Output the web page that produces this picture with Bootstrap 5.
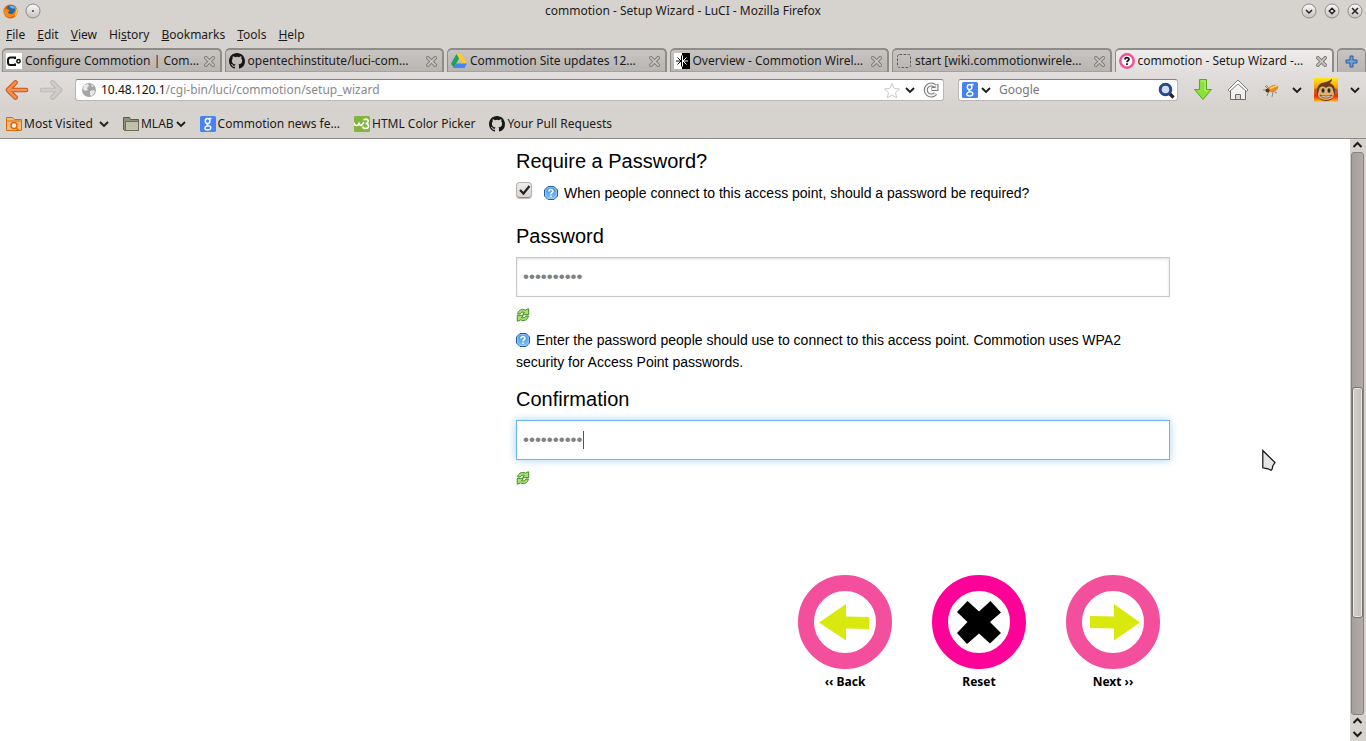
<!DOCTYPE html>
<html lang="en">
<head>
<meta charset="utf-8">
<meta name="viewport" content="width=device-width, initial-scale=1">
<title>commotion - Setup Wizard - LuCI</title>
<link href="https://cdn.jsdelivr.net/npm/bootstrap@5.3.0/dist/css/bootstrap.min.css" rel="stylesheet">
<style>
  :root { --chrome: #d6d2ce; --edge: #8f8b88; }
  body { font-family: "Noto Sans", "Open Sans", sans-serif; font-size: 12px; line-height: 16px; color: #1c1b1a; background: var(--chrome); }
  svg { display: block; flex: none; }
  button { font: inherit; color: inherit; background: none; border: 0; padding: 0; }

  .title-bar { height: 22px; padding: 0 3px; }
  .title-bar h1 { font-size: 12px; line-height: 16px; font-weight: 400; }
  .side-slot { width: 80px; gap: 7px; }
  .menu-bar { height: 26px; padding: 0 6px; gap: 12px; }

  .tab-strip { height: 24px; gap: 3px; padding-left: 2px; }
  .browser-tab { flex: 1 1 0; min-width: 0; border: 2px solid var(--edge); border-width: 2px 2px 0 1px; border-radius: 5px 5px 0 0; background: linear-gradient(#c8c4c2, #b8b4b2); padding: 0 5px 0 3px; gap: 3px; box-shadow: inset 0 -1px #a5a19f; }
  .browser-tab.current { background: linear-gradient(#efedeb, #e2dedd); box-shadow: none; }
  .tab-label { flex: 1 1 0; min-width: 0; overflow: hidden; white-space: nowrap; text-align: left; }
  .new-tab { width: 29px; border: 2px solid var(--edge); border-width: 2px 1px 0 1px; border-radius: 5px 5px 0 0; background: linear-gradient(#c8c4c2, #b8b4b2); }

  .nav-bar { height: 36px; padding: 0 6px 0 5px; background: linear-gradient(#e2dedd, var(--chrome)); }
  .field-box { height: 22px; background: #fff; border: 1px solid #bab6b3; border-top: 1px solid #85817e; border-radius: 3px; }
  .field-box input { border: 0; outline: 0; background: transparent; min-width: 0; padding: 0; }
  .address { flex: 1 1 0; margin-left: 12px; padding: 0 4px 0 5px; }
  .address-text { flex: 1 1 0; color: #8b8988; white-space: nowrap; overflow: hidden; }
  .address-text b { font-weight: 400; color: #111; }
  .search { width: 220px; margin-left: 14px; padding: 0 2px 0 3px; }
  .search input { flex: 1 1 0; color: #1c1b1a; }
  .search input::placeholder { color: #777; opacity: 1; }
  .engine { gap: 3px; }
  .tool-icons { margin-left: 14px; gap: 12px; }

  .bookmark-bar { height: 31px; padding: 1px 6px 0; gap: 14px; border-bottom: 1px solid var(--edge); }
  .bookmark-bar a { color: inherit; text-decoration: none; gap: 2px; white-space: nowrap; }

  .viewport { background: #fff; min-height: 0; }
  .page-wrap { max-width: 990px; padding-top: 10px; font-family: "Liberation Sans", Arial, sans-serif; font-size: 14px; line-height: 22px; color: #000; }
  .sidebar { width: 336px; flex: none; }
  .page-wrap h2 { font-size: 20px; line-height: 24px; font-weight: 400; margin: 14px 0 9px; }
  .page-wrap h2:first-child { margin-top: 0; }
  .tick-row { margin-bottom: 20px; }
  .tick { appearance: none; width: 16px; height: 16px; margin: 0; border-radius: 4px; border: 1px solid #b5b2af; border-bottom-color: #8e8b88; background: linear-gradient(#efedeb, #d8d5d2); box-shadow: 0 1px 1px #bbb; }
  .tick-mark { left: 3px; top: 2px; pointer-events: none; }
  .pass { display: block; width: 100%; height: 40px; border: 1px solid #c8c8c8; border-radius: 0; padding: 0 6px; font-family: "Liberation Sans", Arial, sans-serif; font-size: 17px; color: #808080; outline: 0; box-shadow: inset 0 1px 3px #ddd; caret-color: transparent; }
  .pass.active { border-color: #6db3ee; box-shadow: 0 0 8px #a3d1f5; }
  .caret { position: absolute; left: 67px; top: 11px; width: 1px; height: 18px; background: #555; }
  .help-icon { display: inline-block; vertical-align: -2px; margin-right: 6px; }
  .refresh { display: block; margin: 11px 0 7px; }
  .wizard-nav { gap: 40px; padding-right: 10px; margin-top: 90px; }
  .wizard-nav button { width: 94px; font-family: "Noto Sans", "Open Sans", sans-serif; font-size: 12px; line-height: 16px; font-weight: 700; }
  .wizard-nav svg { margin-bottom: 5px; }

  .scroll-bar { width: 16px; background: var(--chrome); padding: 0 2px 0 1px; }
  .trough { flex: 1 1 0; background: linear-gradient(90deg, #a4a09c, #b4aaa8); border: 1px solid #85817e; border-radius: 3px; }
  .before-thumb { flex: 236 1 0; }
  .after-thumb { flex: 97 1 0; }
  .thumb { flex: 230 1 0; border: 1px solid #77736f; border-radius: 3px; background: linear-gradient(90deg, #d2cecb, #c4c0bd); box-shadow: inset 0 0 0 1px #e9e6e4; }
  .pointer { position: absolute; left: 92.4%; top: 449px; }
</style>
</head>
<body class="d-flex flex-column vh-100 overflow-hidden">

<svg width="0" height="0" class="position-absolute" aria-hidden="true">
  <defs>
    <linearGradient id="knob" x2="0" y2="1"><stop stop-color="#fafafa"/><stop offset="1" stop-color="#c5c2bf"/></linearGradient>
    <linearGradient id="blue" x2="0" y2="1"><stop stop-color="#3f8fdc"/><stop offset="1" stop-color="#7fc4f5"/></linearGradient>
    <symbol id="i-close" viewBox="0 0 12 12"><path d="M2 2l8 8M10 2l-8 8" stroke="#827f7b" stroke-width="4" stroke-linecap="square"/><path d="M2 2l8 8M10 2l-8 8" stroke="#c9c6c3" stroke-width="1.8" stroke-linecap="square"/></symbol>
    <symbol id="i-down" viewBox="0 0 10 10"><path d="M1 3l4 4 4-4" fill="none" stroke="#1c1b1a" stroke-width="1.800"/></symbol>
    <symbol id="i-github" viewBox="0 0 16 16"><path fill="#181717" d="M8 0C3.580 0 0 3.580 0 8c0 3.540 2.290 6.530 5.470 7.590.4.070.55-.17.55-.38 0-.19-.01-.82-.01-1.490-2.010.37-2.530-.49-2.690-.94-.09-.23-.48-.94-.82-1.130-.28-.15-.68-.52-.01-.53.63-.01 1.080.58 1.230.82.72 1.210 1.870.87 2.330.66.07-.52.28-.87.51-1.070-1.780-.2-3.640-.89-3.640-3.950 0-.87.31-1.590.82-2.150-.08-.2-.36-1.020.08-2.120 0 0 .67-.21 2.200.82a7.600 7.600 0 0 1 4 0c1.530-1.040 2.200-.82 2.200-.82.44 1.100.16 1.920.08 2.120.51.56.82 1.270.82 2.150 0 3.070-1.870 3.750-3.650 3.950.29.25.54.73.54 1.480 0 1.070-.01 1.930-.01 2.200 0 .21.15.46.55.38A8 8 0 0 0 16 8c0-4.420-3.580-8-8-8z"/></symbol>
    <symbol id="i-g" viewBox="0 0 16 16"><rect width="16" height="16" rx="1.500" fill="#4682f4"/><g fill="none" stroke="#fff"><ellipse cx="7.600" cy="5" rx="2.300" ry="2.600" stroke-width="1.500"/><path d="M9 2.500h2.500M8.600 7.400c-2 .8-2 1.800-.3 2.300M8.300 9.600c4 1 3 4.400-.7 4.400-4 0-3.600-3.700.7-4.400z" stroke-width="1.400"/></g></symbol>
    <symbol id="i-refresh" viewBox="0 0 13 13"><g fill="#a9e06c" stroke="#3c8a25" stroke-width=".9" stroke-linejoin="round"><path d="M1.500 5.500C2 2 5.500.2 8.800 2L11 .8h.8v5.400H6.500v-.8L8 4.200C6 3.300 4.300 4 3.800 5.500z"/><path d="M11.500 7.500c-.5 3.500-4 5.300-7.300 3.500L2 12.200h-.8V6.800h5.300v.8L5 8.800c2 .9 3.700.2 4.200-1.300z"/></g></symbol>
    <symbol id="i-help" viewBox="0 0 14 14"><path d="M4 .5h6L13.500 4v6L10 13.500H4L.5 10V4z" fill="url(#blue)" stroke="#235f9e"/><path d="M4 1.700h6L12.300 4v6L10 12.300H4L1.700 10V4z" fill="none" stroke="#a4d3f8" stroke-width=".8"/><path d="M5 5.400c0-2.400 4-2.300 4-.2 0 1.400-2 1.500-2 3M7 9.500v1.500" fill="none" stroke="#fff" stroke-width="1.500"/></symbol>
  </defs>
</svg>

<header class="title-bar d-flex align-items-center justify-content-between flex-shrink-0">
  <div class="side-slot d-flex align-items-center">
    <svg width="15" height="15" viewBox="0 0 16 16"><circle cx="8" cy="8" r="7.500" fill="#e66000"/><path d="M4 4c2-4 8-4 10 0l1 4-4 3-5-1z" fill="#2c62a8"/><path d="M7 2c3-1 5 0 6 2l-2 1-3-1z" fill="#5bbbe0"/><path d="M1 4l2 2c2-1 3 0 4 1L5 9c2 3 6 3 8-2 1 6-5 8-8 7C1 12 0 8 1 4z" fill="#f58a1c"/><path d="M13 3c3 3 3 8-1 11 1-3 2-6 1-11z" fill="#ffcb2d"/></svg>
    <button aria-label="Window menu"><svg width="16" height="16" viewBox="0 0 16 16"><circle cx="8" cy="8" r="7" fill="url(#knob)" stroke="#8e8b88"/><circle cx="8" cy="8" r="1" fill="#444"/></svg></button>
  </div>
  <h1 class="m-0">commotion - Setup Wizard - LuCI - Mozilla Firefox</h1>
  <div class="side-slot d-flex justify-content-end">
    <button aria-label="Minimize"><svg width="16" height="16" viewBox="0 0 16 16"><circle cx="8" cy="8" r="7" fill="url(#knob)" stroke="#8e8b88"/><path d="M5 7l3 3 3-3" fill="none" stroke="#222" stroke-width="1.500"/></svg></button>
    <button aria-label="Maximize"><svg width="16" height="16" viewBox="0 0 16 16"><circle cx="8" cy="8" r="7" fill="url(#knob)" stroke="#8e8b88"/><path d="M8 5.300L10.700 8 8 10.700 5.300 8z" fill="none" stroke="#222" stroke-width="1.500"/></svg></button>
    <button aria-label="Close"><svg width="16" height="16" viewBox="0 0 16 16"><circle cx="8" cy="8" r="7" fill="url(#knob)" stroke="#8e8b88"/><path d="M5 5l6 6M11 5l-6 6" stroke="#222" stroke-width="1.500"/></svg></button>
  </div>
</header>

<nav class="menu-bar d-flex align-items-center flex-shrink-0" aria-label="Menu">
  <button><u>F</u>ile</button>
  <button><u>E</u>dit</button>
  <button><u>V</u>iew</button>
  <button>Hi<u>s</u>tory</button>
  <button><u>B</u>ookmarks</button>
  <button><u>T</u>ools</button>
  <button><u>H</u>elp</button>
</nav>

<div class="tab-strip d-flex flex-shrink-0">
  <div class="browser-tab d-flex align-items-center">
    <svg width="16" height="16" viewBox="0 0 16 16"><path fill="#fff" d="M0 0h16v16H0z"/><path d="M9 6V4.500H4.500Q2 4.500 2 7v2.500Q2 12 4.500 12H9v-1.500" fill="none" stroke="#111" stroke-width="2"/><circle cx="12.500" cy="8.300" r="1.700" fill="none" stroke="#111" stroke-width="1.500"/></svg>
    <button class="tab-label">Configure Commotion | Com…</button>
    <button aria-label="Close tab"><svg width="11" height="11"><use href="#i-close"/></svg></button>
  </div>
  <div class="browser-tab d-flex align-items-center">
    <svg width="16" height="16"><use href="#i-github"/></svg>
    <button class="tab-label">opentechinstitute/luci-com…</button>
    <button aria-label="Close tab"><svg width="11" height="11"><use href="#i-close"/></svg></button>
  </div>
  <div class="browser-tab d-flex align-items-center">
    <svg width="16" height="16" viewBox="0 0 16 16"><path d="M5.500 1h5L16 10.500h-5z" fill="#fcc931"/><path d="M5.500 1L8 5.500 2.700 15 0 10.500z" fill="#1aa260"/><path d="M5.300 10.500H16L13.500 15H2.700z" fill="#4285f4"/></svg>
    <button class="tab-label">Commotion Site updates 12…</button>
    <button aria-label="Close tab"><svg width="11" height="11"><use href="#i-close"/></svg></button>
  </div>
  <div class="browser-tab d-flex align-items-center">
    <svg width="16" height="16" viewBox="0 0 16 16"><path fill="#fff" d="M0 0h8v16H0z"/><path d="M8 0h8v16H8z"/><path d="M7.500 2.500v11M7 8H2M7 8L3.500 4.500M7 8l-3.500 3.500" stroke="#000" fill="none"/><path d="M8.500 2.500v11M9 8h5M9 8l3.500-3.500M9 8l3.500 3.500" stroke="#fff" fill="none"/></svg>
    <button class="tab-label">Overview - Commotion Wirel…</button>
    <button aria-label="Close tab"><svg width="11" height="11"><use href="#i-close"/></svg></button>
  </div>
  <div class="browser-tab d-flex align-items-center">
    <svg width="16" height="16" viewBox="0 0 16 16"><rect x="1.500" y="1.500" width="13" height="13" rx="2" fill="none" stroke="#5c5a58" stroke-dasharray="2.500 1.500"/></svg>
    <button class="tab-label">start [wiki.commotionwirele…</button>
    <button aria-label="Close tab"><svg width="11" height="11"><use href="#i-close"/></svg></button>
  </div>
  <div class="browser-tab current d-flex align-items-center">
    <svg width="16" height="16" viewBox="0 0 16 16"><circle cx="8" cy="8" r="6.700" fill="#fff" stroke="#f44f9c" stroke-width="2.500"/><path d="M6 6.600c0-2.600 4-2.400 4-.3C10 7.500 8 7.600 8 9.200M8 10.300v1.700" fill="none" stroke="#111" stroke-width="1.700"/></svg>
    <button class="tab-label">commotion - Setup Wizard -…</button>
    <button aria-label="Close tab"><svg width="11" height="11"><use href="#i-close"/></svg></button>
  </div>
  <button class="new-tab d-flex align-items-center justify-content-center" aria-label="New tab"><svg width="13" height="13" viewBox="0 0 13 13"><path d="M5 1h3v4h4v3H8v4H5V8H1V5h4z" fill="#6f9fd6" stroke="#2a5a9c"/></svg></button>
</div>

<div class="nav-bar d-flex align-items-center flex-shrink-0">
  <button aria-label="Back"><svg width="24" height="20" viewBox="0 0 24 20"><path d="M10.500 2.500L3 10l7.500 7.500M4 10h17" fill="none" stroke="#d2521c" stroke-width="4.600" stroke-linecap="round" stroke-linejoin="round"/><path d="M10.500 2.500L3 10l7.500 7.500M4 10h17" fill="none" stroke="#f3924f" stroke-width="2.600" stroke-linecap="round" stroke-linejoin="round"/></svg></button>
  <button class="ms-2" aria-label="Forward"><svg width="26" height="20" viewBox="0 0 26 20"><path d="M15.500 2.500L23 10l-7.500 7.500M22 10H5" fill="none" stroke="#b9b5b2" stroke-width="4.600" stroke-linecap="round" stroke-linejoin="round"/><path d="M15.500 2.500L23 10l-7.500 7.500M22 10H5" fill="none" stroke="#d0ccc9" stroke-width="2.800" stroke-linecap="round" stroke-linejoin="round"/></svg></button>
  <div class="address field-box d-flex align-items-center">
    <svg width="16" height="16" viewBox="0 0 16 16"><circle cx="8" cy="8" r="7" fill="#a5a5a5"/><path d="M3 3l4-1 1 2-2 2 1 2-3 1-2-2zM9 9l4-1 1 2-3 4-2-1zM10 2l3 2-2 1z" fill="#e8e8e8"/></svg>
    <div class="address-text ms-1" role="textbox" aria-label="Address"><b>10.48.120.1</b>/cgi-bin/luci/commotion/setup_wizard</div>
    <button aria-label="Bookmark this page"><svg width="18" height="17" viewBox="0 0 18 17"><path d="M9 1.500l2.200 5 5.300.5-4 3.600 1.200 5.200L9 13l-4.700 2.800 1.200-5.200-4-3.600 5.300-.5z" fill="#fff" stroke="#c9c9c9"/></svg></button>
    <button class="mx-1" aria-label="History"><svg width="10" height="10"><use href="#i-down"/></svg></button>
    <button class="ms-1" aria-label="Reload"><svg width="16" height="16" viewBox="0 0 16 16"><path d="M12.500 11.500A5.500 5.500 0 1 1 12 4M8.500 7h5V2" fill="none" stroke="#777" stroke-width="4"/><path d="M12.500 11.500A5.500 5.500 0 1 1 12 4M9 7h4.500V2.500" fill="none" stroke="#f4f4f4" stroke-width="1.900"/></svg></button>
  </div>
  <div class="search field-box d-flex align-items-center">
    <button class="engine d-flex align-items-center" aria-label="Search engine"><svg width="16" height="16"><use href="#i-g"/></svg><svg width="10" height="10"><use href="#i-down"/></svg></button>
    <input class="ms-2" type="text" placeholder="Google" aria-label="Search">
    <button aria-label="Go"><svg width="17" height="17" viewBox="0 0 17 17"><path d="M11 11l4.500 4.500" stroke="#222" stroke-width="3.200"/><circle cx="7.500" cy="7.500" r="5.300" fill="#cfdcf2" stroke="#28478f" stroke-width="3"/></svg></button>
  </div>
  <div class="tool-icons d-flex align-items-center">
    <button aria-label="Downloads"><svg width="22" height="24" viewBox="0 0 22 24"><path d="M7.500 1.500h7v10h5L11 21.500 2.500 11.500h5z" fill="#8be03a" stroke="#4fae12" stroke-linejoin="round"/><path d="M9 3h4v10h3" fill="none" stroke="#bdf27c"/></svg></button>
    <button aria-label="Home"><svg width="24" height="24" viewBox="0 0 24 24"><path d="M4.500 12v9.500h5v-5h5v5h5V12L12 5z" fill="#f2f1f0" stroke="#6e6b69"/><path d="M12 2L2 12l1.500 1.500L12 6l8.500 7.500L22 12z" fill="#fff" stroke="#7e7b79"/><path d="M4.500 21.500h15" stroke="#6e6b69"/></svg></button>
    <button aria-label="Firebug"><svg width="18" height="16" viewBox="0 0 18 16"><path d="M3 4l4 4M1 8h5M5 14l2-5M10 15l1-5M15 11l-4-2M4 3l5 5" stroke="#8c8678" fill="none"/><ellipse cx="11" cy="6.500" rx="5.500" ry="3.300" transform="rotate(-22 11 6.500)" fill="#e98b22"/><path d="M8 6.500l7-3" stroke="#fbd26a" stroke-width="1.500"/><circle cx="5.500" cy="8.500" r="2" fill="#5b3a1c"/></svg></button>
    <button aria-label="Firebug options"><svg width="10" height="10"><use href="#i-down"/></svg></button>
    <button aria-label="Greasemonkey"><svg width="24" height="24" viewBox="0 0 24 24"><defs><linearGradient id="fire" x2="0" y2="1"><stop stop-color="#ffe81a"/><stop offset=".4" stop-color="#fb9a0c"/><stop offset=".75" stop-color="#ea2408"/><stop offset="1" stop-color="#ffd21a"/></linearGradient></defs><path fill="url(#fire)" d="M0 0h24v24H0z"/><circle cx="3.300" cy="13" r="2.800" fill="#a9642b"/><circle cx="20.700" cy="13" r="2.800" fill="#a9642b"/><path d="M3 13C3 8 6 5 10 4.500 13 4 15 3 18 .8c0 2-1 3.500-2.500 4.500C19 6 21 9 21 13c0 6-3 10-9 10S3 19 3 13z" fill="#6b3a18"/><path d="M5 12.500C5 8 9.500 7.500 12 10c2.500-2.500 7-2 7 2.500 3 6-1 9.500-7 9.500S2 18.500 5 12.500z" fill="#e5ad70"/><ellipse cx="9" cy="12.500" rx="1.500" ry="2.200" fill="#12352a"/><ellipse cx="15" cy="12.500" rx="1.500" ry="2.200" fill="#12352a"/><path d="M6 17c3 1.500 9 1.500 12 0-1 4-11 4-12 0z" fill="#fff" stroke="#6b3410" stroke-width=".8"/></svg></button>
    <button aria-label="Greasemonkey options"><svg width="10" height="10"><use href="#i-down"/></svg></button>
  </div>
</div>

<nav class="bookmark-bar d-flex align-items-center flex-shrink-0" aria-label="Bookmarks">
  <a href="#" class="d-flex align-items-center"><svg width="16" height="16" viewBox="0 0 16 16"><path d="M.5 14.500v-13h6l2 2h7v11z" fill="#f8ba7c" stroke="#d96a0b"/><path d="M1 5h14" stroke="#d96a0b"/><circle cx="8" cy="9.500" r="3" fill="#fff3e4" stroke="#d96a0b" stroke-width="1.500"/><path d="M10 12l3 2.500" stroke="#d96a0b" stroke-width="1.500"/></svg>Most Visited <svg class="ms-1" width="10" height="10"><use href="#i-down"/></svg></a>
  <a href="#" class="d-flex align-items-center"><svg width="16" height="16" viewBox="0 0 16 16"><path d="M.5 13.500v-12h6l1 2h8v11h-14z" fill="#8f9278" stroke="#595b49"/><path d="M2.500 14.500v-9h13v9z" fill="#bfc2a9" stroke="#6b6d59"/></svg>MLAB <svg width="10" height="10"><use href="#i-down"/></svg></a>
  <a href="#" class="d-flex align-items-center"><svg width="16" height="16"><use href="#i-g"/></svg>Commotion news fe…</a>
  <a href="#" class="d-flex align-items-center"><svg width="16" height="16" viewBox="0 0 16 16"><rect width="16" height="16" rx="1.500" fill="#82b53c"/><path d="M0 6.500q0 3 2.500 3T5 6.500q0 3 2.500 3L10 6M9.500 4c3-2 5.500 0 4.500 2-.5 1-1.500 1.500-2.500 1.500 4 0 4 5 0 5-1.500 0-2.500-.8-2.700-2" fill="none" stroke="#fff" stroke-width="1.600"/></svg>HTML Color Picker</a>
  <a href="#" class="d-flex align-items-center"><svg width="16" height="16"><use href="#i-github"/></svg>Your Pull Requests</a>
</nav>

<div class="viewport d-flex flex-grow-1">
  <main class="flex-grow-1 overflow-hidden">
    <form class="page-wrap mx-auto d-flex" onsubmit="return false">
      <div class="sidebar"></div>
      <div class="flex-grow-1">
        <h2>Require a Password?</h2>
        <div class="tick-row d-flex">
          <span class="position-relative d-flex me-2 pe-1">
            <input class="tick" type="checkbox" id="need" checked>
            <svg class="tick-mark position-absolute" width="12" height="12" viewBox="0 0 12 12"><path d="M1 6l3.500 3.500L10.500 2" fill="none" stroke="#222" stroke-width="2.200"/></svg>
          </span>
          <label for="need"><svg class="help-icon" width="14" height="14"><use href="#i-help"/></svg>When people connect to this access point, should a password be required?</label>
        </div>
        <h2><label for="pw">Password</label></h2>
        <input class="pass" type="password" id="pw" value="commotion1">
        <button type="button" class="refresh" aria-label="Show password"><svg width="14" height="14"><use href="#i-refresh"/></svg></button>
        <p class="m-0"><svg class="help-icon" width="14" height="14"><use href="#i-help"/></svg>Enter the password people should use to connect to this access point. Commotion uses WPA2 security for Access Point passwords.</p>
        <h2><label for="pw2">Confirmation</label></h2>
        <div class="position-relative">
          <input class="pass active" type="password" id="pw2" value="commotion1">
          <span class="caret"></span>
        </div>
        <button type="button" class="refresh" aria-label="Show confirmation"><svg width="14" height="14"><use href="#i-refresh"/></svg></button>
        <div class="wizard-nav d-flex justify-content-end">
          <button type="button"><svg width="94" height="94" viewBox="0 0 94 94"><circle cx="47" cy="47" r="39" fill="#fff" stroke="#f44f9c" stroke-width="16"/><path d="M21 47.500L48 29v12.500l23 .5v12l-23-.5V65.500z" fill="#d9e90d"/></svg>‹‹ Back</button>
          <button type="button"><svg width="94" height="94" viewBox="0 0 94 94"><circle cx="47" cy="47" r="39" fill="#fff" stroke="#ff0099" stroke-width="16"/><path d="M35.500 26L47 36.500 58.500 26 69 37.500 58 47 69 58 58 68.500 47 58.500 35 69 25 58 35.500 47 25 37z"/></svg>Reset</button>
          <button type="button"><svg width="94" height="94" viewBox="0 0 94 94"><circle cx="47" cy="47" r="39" fill="#fff" stroke="#f44f9c" stroke-width="16"/><path d="M74 47.500L48 29v12.500l-24-.5v12l24 .5V65.500z" fill="#d9e90d"/></svg>Next ››</button>
        </div>
      </div>
    </form>
  </main>
  <div class="scroll-bar d-flex flex-column align-items-stretch">
    <button class="d-flex justify-content-center" aria-label="Scroll up"><svg width="13" height="13" viewBox="0 0 13 13"><path d="M2.500 8l4-4 4 4" fill="none" stroke="#1c1b1a" stroke-width="2"/></svg></button>
    <div class="trough d-flex flex-column"><div class="before-thumb"></div><div class="thumb"></div><div class="after-thumb"></div></div>
    <button class="d-flex justify-content-center" aria-label="Scroll up"><svg width="13" height="13" viewBox="0 0 13 13"><path d="M2.500 8l4-4 4 4" fill="none" stroke="#1c1b1a" stroke-width="2"/></svg></button>
    <button class="d-flex justify-content-center" aria-label="Scroll down"><svg width="13" height="13" viewBox="0 0 13 13"><path d="M2.500 4l4 4 4-4" fill="none" stroke="#1c1b1a" stroke-width="2"/></svg></button>
  </div>
</div>

<svg class="pointer" width="15" height="24" viewBox="0 0 15 24" aria-hidden="true"><path d="M.8 1.500L13 13.500l-2 3-1 4-1 .8-3-1.500-5.200-1z" fill="#e4e4e4" stroke="#111" stroke-width="1.200"/></svg>

<script src="https://cdn.jsdelivr.net/npm/bootstrap@5.3.0/dist/js/bootstrap.bundle.min.js"></script>
</body>
</html>
